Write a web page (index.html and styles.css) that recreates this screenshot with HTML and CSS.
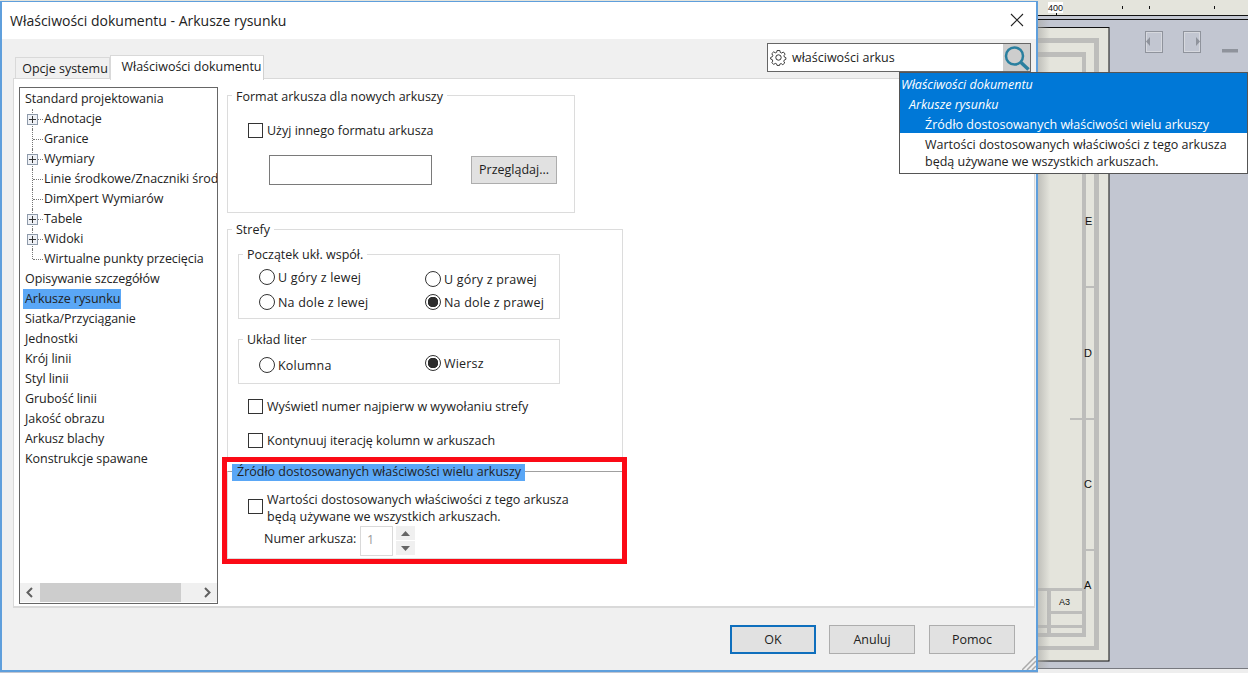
FILE: index.html
```html
<!DOCTYPE html>
<html lang="pl">
<head>
<meta charset="utf-8">
<title>Właściwości dokumentu - Arkusze rysunku</title>
<link rel="stylesheet" href="styles.css">
</head>
<body>
<div class="app">
  <svg class="drawing" width="1248" height="673" viewBox="0 0 1248 673">
    <rect x="0" y="0" width="1248" height="15" fill="#e4e4dc"/>
    <rect x="0" y="15" width="1248" height="1" fill="#111"/>
    <rect x="0" y="19" width="1248" height="1" fill="#111"/>
    <rect x="1048" y="2" width="15" height="11" fill="#fff"/>
    <text x="1048" y="11" class="tiny">400</text>
    <rect x="1056" y="13" width="1" height="2" fill="#111"/>
    <rect x="1122" y="6" width="1" height="3" fill="#111"/>
    <rect x="1149" y="6" width="1" height="3" fill="#111"/>
    <rect x="1214" y="6" width="1" height="3" fill="#111"/>
    <rect x="1000" y="27.5" width="109" height="633.5" fill="#e4e4dc" stroke="#111"/>
    <g fill="#bdbdbb">
      <rect x="1000" y="38" width="99" height="5"/>
      <rect x="1094" y="38" width="5" height="612"/>
      <rect x="1000" y="646" width="99" height="4"/>
      <rect x="1000" y="52" width="86" height="5"/>
      <rect x="1082" y="52" width="4" height="585"/>
      <rect x="1000" y="633" width="86" height="4"/>
      <rect x="1086" y="286" width="8" height="2"/>
      <rect x="1070" y="418" width="24" height="2"/>
      <rect x="1086" y="549" width="8" height="2"/>
      <rect x="1000" y="588" width="82" height="3"/>
      <rect x="1047" y="588" width="4" height="45"/>
      <rect x="1051" y="611" width="31" height="3"/>
      <rect x="1000" y="625" width="82" height="3"/>
    </g>
    <text x="1085" y="225" class="sheetmark">E</text>
    <text x="1084" y="357" class="sheetmark">D</text>
    <text x="1084" y="488" class="sheetmark">C</text>
    <text x="1084" y="589" class="sheetmark">A</text>
    <text x="1059" y="605" class="tiny">A3</text>
    <rect x="1038" y="20" width="12" height="648" fill="url(#shade)"/>
    <defs>
      <linearGradient id="shade">
        <stop offset="0" stop-color="#a8a8a4" stop-opacity=".6"/>
        <stop offset="1" stop-color="#a8a8a4" stop-opacity="0"/>
      </linearGradient>
    </defs>
    <rect x="1038" y="668" width="210" height="1" fill="#77797f"/>
    <rect x="1038" y="669" width="210" height="4" fill="#eeeeee"/>
    <g fill="none" stroke="#8f939c" stroke-width="1">
      <rect x="1145.5" y="31.5" width="17" height="21"/>
      <rect x="1146.5" y="32.5" width="15" height="19" stroke="#d6d8de"/>
      <rect x="1183.5" y="31.5" width="17" height="21"/>
      <rect x="1184.5" y="32.5" width="15" height="19" stroke="#d6d8de"/>
    </g>
    <path d="M1150 37v9l-4-4.500z" fill="#8f939c"/>
    <path d="M1196 37v9l4-4.500z" fill="#8f939c"/>
    <rect x="1222" y="49" width="16" height="3.500" fill="#8f939c"/>
  </svg>

  <section class="dialog">
    <header class="titlebar">
      <h1 class="title">Właściwości dokumentu - Arkusze rysunku</h1>
      <svg class="close" width="14" height="14" viewBox="0 0 14 14"><path d="M1 1l12 12M13 1L1 13" stroke="#222" stroke-width="1.100" fill="none"/></svg>
    </header>

    <div class="tabstrip">
      <div class="tabs">
        <div class="tab">Opcje systemu</div>
        <div class="tab tab-active">Właściwości dokumentu</div>
      </div>
      <div class="search">
        <svg class="gear" width="17" height="17" viewBox="0 0 17 17"><path d="M7 1.500h3l.4 2 1.500.7 1.800-1.100 1.900 2.200-1.200 1.600.3 1.500 1.700.7v1.800l-1.800.8-.4 1.400 1 1.700-2.100 1.800-1.700-1.200-1.400.5-.4 1.500H7l-.5-1.700-1.400-.5-1.600 1.100-2.100-1.900 1-1.600-.4-1.500-1.800-.7V8.900l1.900-.9.400-1.400-1.100-1.700 2.100-2 1.600 1.100 1.500-.6z" fill="none" stroke="#333" transform="scale(.94) translate(.5 .1)"/><circle cx="8.500" cy="8.500" r="2.700" fill="none" stroke="#333"/></svg>
        <span class="search-text">właściwości arkus</span>
        <span class="search-btn">
          <svg width="27" height="27" viewBox="0 0 27 27"><circle cx="11.500" cy="12" r="8.500" fill="none" stroke="#2a7f9f" stroke-width="2.500"/><path d="M18 18.500l7.500 7" stroke="#2a7f9f" stroke-width="3.500" fill="none"/></svg>
        </span>
      </div>
    </div>

    <div class="panel">
      <nav class="tree">
        <div class="tree-rows">
          <div class="node">Standard projektowania</div>
          <div class="node child"><span class="twig"><span class="plus"></span></span>Adnotacje</div>
          <div class="node child"><span class="twig"></span>Granice</div>
          <div class="node child"><span class="twig"><span class="plus"></span></span>Wymiary</div>
          <div class="node child"><span class="twig"></span>Linie środkowe/Znaczniki środka</div>
          <div class="node child"><span class="twig"></span>DimXpert Wymiarów</div>
          <div class="node child"><span class="twig"><span class="plus"></span></span>Tabele</div>
          <div class="node child"><span class="twig"><span class="plus"></span></span>Widoki</div>
          <div class="node child last"><span class="twig"></span>Wirtualne punkty przecięcia</div>
          <div class="node">Opisywanie szczegółów</div>
          <div class="node"><span class="selected">Arkusze rysunku</span></div>
          <div class="node">Siatka/Przyciąganie</div>
          <div class="node">Jednostki</div>
          <div class="node">Krój linii</div>
          <div class="node">Styl linii</div>
          <div class="node">Grubość linii</div>
          <div class="node">Jakość obrazu</div>
          <div class="node">Arkusz blachy</div>
          <div class="node">Konstrukcje spawane</div>
        </div>
        <div class="hscroll">
          <svg class="arrow" width="20" height="19" viewBox="0 0 20 19"><path d="M12 5L7.500 9.500 12 14" fill="none" stroke="#606060" stroke-width="2"/></svg>
          <div class="thumb"></div>
          <svg class="arrow arrow-right" width="20" height="19" viewBox="0 0 20 19"><path d="M8 5l4.500 4.500L8 14" fill="none" stroke="#606060" stroke-width="2"/></svg>
        </div>
      </nav>

      <div class="content">
        <div class="group group-format">
          <div class="group-title">Format arkusza dla nowych arkuszy</div>
          <label class="check check-format"><span class="box"></span>Użyj innego formatu arkusza</label>
          <div class="file-row">
            <div class="file-input"></div>
            <div class="btn btn-browse">Przeglądaj...</div>
          </div>
        </div>

        <div class="group group-zones">
          <div class="group-title">Strefy</div>
          <div class="group sub sub-origin">
            <div class="group-title sub-title">Początek ukł. współ.</div>
            <div class="radios">
              <label class="radio"><span class="dot"></span>U góry z lewej</label>
              <label class="radio low"><span class="dot"></span>U góry z prawej</label>
              <label class="radio"><span class="dot"></span>Na dole z lewej</label>
              <label class="radio"><span class="dot on"></span>Na dole z prawej</label>
            </div>
          </div>
          <div class="group sub sub-letters">
            <div class="group-title sub-title">Układ liter</div>
            <div class="radios">
              <label class="radio low"><span class="dot"></span>Kolumna</label>
              <label class="radio"><span class="dot on"></span>Wiersz</label>
            </div>
          </div>
          <label class="check check-first"><span class="box"></span>Wyświetl numer najpierw w wywołaniu strefy</label>
          <label class="check check-second"><span class="box"></span>Kontynuuj iterację kolumn w arkuszach</label>
        </div>

        <div class="group group-source">
          <div class="group-title source-title">Źródło dostosowanych właściwości wielu arkuszy</div>
          <label class="check check-source"><span class="box"></span><span>Wartości dostosowanych właściwości z tego arkusza<br>będą używane we wszystkich arkuszach.</span></label>
          <div class="sheet-number">
            <span>Numer arkusza:</span>
            <div class="num-input">1</div>
            <div class="spin">
              <span class="spin-btn"><svg width="9" height="5" viewBox="0 0 9 5"><path d="M4.500 0L9 5H0z" fill="#666"/></svg></span>
              <span class="spin-btn"><svg width="9" height="5" viewBox="0 0 9 5"><path d="M4.500 5L0 0h9z" fill="#666"/></svg></span>
            </div>
          </div>
        </div>
        <div class="highlight"></div>
      </div>
    </div>

    <footer class="footer">
      <div class="btn btn-main btn-default">OK</div>
      <div class="btn btn-main">Anuluj</div>
      <div class="btn btn-main btn-last">Pomoc</div>
    </footer>
    <svg class="grip" width="14" height="14" viewBox="0 0 14 14"><path d="M0 14L14 0M5 14l9-9M10 14l4-4" stroke="#aaa" stroke-width="1.500" fill="none"/></svg>
  </section>

  <aside class="results">
    <div class="results-head">
      <div class="res res-1">Właściwości dokumentu</div>
      <div class="res res-2">Arkusze rysunku</div>
      <div class="res res-3">Źródło dostosowanych właściwości wielu arkuszy</div>
    </div>
    <div class="results-body">Wartości dostosowanych właściwości z tego arkusza<br>będą używane we wszystkich arkuszach.</div>
  </aside>
</div>
</body>
</html>
```
FILE: styles.css
```css
* { box-sizing: border-box; }
html, body { margin: 0; padding: 0; }
body {
  width: 1248px;
  height: 673px;
  overflow: hidden;
  background: #c2c6d1;
  font-family: "Open Sans", "Noto Sans", sans-serif;
  font-size: 12.5px;
  color: #1a1a1a;
}
.app { position: relative; width: 1248px; height: 673px; overflow: hidden; }
.drawing { position: absolute; left: 0; top: 0; }
.tiny { font: 9px "Liberation Sans", sans-serif; fill: #111; }
.sheetmark { font: 11px "Liberation Sans", sans-serif; fill: #111; }

.dialog {
  position: absolute;
  left: 0;
  top: 1px;
  width: 1038px;
  height: 671px;
  display: flex;
  flex-direction: column;
  background: #f0f0f0;
  border: 1px solid #5f9fdc;
  border-width: 1px 2px 2px 2px;
}
.titlebar {
  height: 37px;
  flex: none;
  background: #fff;
  display: flex;
  align-items: center;
  justify-content: space-between;
  padding: 0 12px 0 8px;
}
.title { margin: 0; font-size: 14px; font-weight: 400; color: #222; }
.close { display: block; margin-top: -2px; }

.tabstrip {
  height: 39px;
  flex: none;
  display: flex;
  justify-content: space-between;
  align-items: flex-start;
  padding: 4px 5px 0 13px;
}
.tabs { display: flex; align-items: flex-end; height: 36px; }
.tab {
  width: 95px;
  height: 22px;
  line-height: 22px;
  padding-left: 5px;
  text-align: center;
  white-space: nowrap;
  background: #f0f0f0;
  border: 1px solid #d9d9d9;
  border-bottom: 0;
  margin-bottom: 0;
}
.tab-active {
  width: 154px;
  height: 25px;
  line-height: 22px;
  padding-left: 9px;
  background: #fff;
  margin-bottom: -1px;
  position: relative;
  z-index: 1;
  border-right-color: #d0d0d0;
}
.search {
  width: 264px;
  height: 29px;
  background: #fff;
  border: 1px solid #666;
  display: flex;
  align-items: center;
  padding-left: 2px;
}
.gear { flex: none; }
.search-text { margin-left: 5px; flex: 1; color: #222; }
.search-btn {
  width: 27px;
  height: 27px;
  background: #cdcdcd;
  display: flex;
  align-items: center;
  justify-content: center;
}

.panel {
  height: 530px;
  flex: none;
  margin: 0 1px 0 11px;
  background: #fff;
  border: 1px solid #d9d9d9;
  border-width: 1px 1px 2px 1px;
  display: flex;
  padding: 8px 0 0 5px;
  gap: 9px;
}
.tree {
  width: 199px;
  height: 517px;
  flex: none;
  border: 1.500px solid #666;
  display: flex;
  flex-direction: column;
}
.tree-rows { flex: 1; overflow: hidden; padding-top: 1px; }
.node {
  height: 20px;
  line-height: 20px;
  padding-left: 5px;
  white-space: nowrap;
  display: flex;
  align-items: center;
  color: #222;
  letter-spacing: -.06px;
}
.child { padding-left: 7px; }
.selected { background: #5aa7f6; height: 20px; margin-left: -2px; padding: 0 1px 0 2px; }
.twig { position: relative; width: 17px; height: 20px; flex: none; display: block; }
.twig::before {
  content: "";
  position: absolute;
  left: 5px;
  top: 0;
  bottom: 0;
  border-left: 1px dotted #777;
}
.twig::after {
  content: "";
  position: absolute;
  left: 6px;
  right: 1px;
  top: 10px;
  border-top: 1px dotted #777;
}
.last .twig::before { bottom: 10px; }
.plus {
  position: absolute;
  z-index: 1;
  left: 0;
  top: 5px;
  width: 11px;
  height: 11px;
  border: 1px solid #8e9aaa;
  background:
    linear-gradient(#333, #333) center / 7px 1px no-repeat,
    linear-gradient(#333, #333) center / 1px 7px no-repeat,
    #eef1f6;
}
.hscroll { height: 19px; flex: none; display: flex; background: #f0f0f0; margin-bottom: 1px; }
.arrow { flex: none; display: block; }
.thumb { width: 141px; background: #cdcdcd; }
.arrow-right { margin-left: auto; }

.content {
  position: relative;
  padding-top: 8px;
  flex: 1;
}
.group { border: 1px solid #dcdcdc; }
.group-title {
  display: table;
  height: 16px;
  line-height: 16px;
  margin: -8px 0 0 4px;
  padding: 0 4px;
  background: #fff;
  color: #222;
}
.group-format { width: 348px; height: 118px; }
.group-format > .group-title { margin-top: -7px; }
.group-zones { width: 396px; height: 229px; margin-top: 16px; border-bottom: 0; }
.sub { margin-left: 10px; width: 322px; }
.sub-title { margin-left: 4px; padding: 0 4px; }
.sub-origin { height: 65px; margin-top: 16px; }
.sub-letters { height: 45px; margin-top: 20px; }
.sub-letters .radios { margin-top: 3px; }

.check { display: flex; align-items: center; color: #222; white-space: nowrap; }
.box { width: 15px; height: 15px; flex: none; border: 1px solid #333; background: #fff; margin-right: 4px; }
.check-format { margin: 17px 0 0 20px; height: 16px; }
.file-row { display: flex; align-items: flex-start; margin: 17px 0 0 41px; }
.file-input { width: 163px; height: 30px; border: 1px solid #7a7a7a; background: #fff; }
.btn { background: #e1e1e1; border: 1px solid #adadad; text-align: center; color: #222; }
.btn-browse { width: 86px; height: 28px; line-height: 26px; margin: 1px 0 0 39px; }

.radios { display: grid; grid-template-columns: 166px 1fr; grid-auto-rows: 25px; margin: 2px 0 0 20px; }
.radio { display: flex; align-items: center; height: 24px; color: #222; letter-spacing: .2px; }
.low { margin-top: 2px; }
.dot { width: 16px; height: 16px; flex: none; border: 1px solid #333; border-radius: 50%; margin-right: 3px; background: #fff; }
.dot.on { background: radial-gradient(circle, #2d2d2d 0 5px, #fff 5.500px); }

.check-first { margin: 14px 0 0 20px; height: 16px; }
.check-second { margin: 18px 0 0 20px; height: 16px; }

.group-source { width: 396px; height: 88px; margin-top: 13px; border-color: #dcdcdc; border-top-color: #a0a0a0; border-bottom: 1px solid #dcdcdc; }
.source-title { background: #5aa7f6; height: 17px; padding: 0 4px 0 5px; margin: -8px 0 0 4px; }
.check-source { align-items: flex-start; margin: 10px 0 0 20px; line-height: 17px; }
.check-source .box { margin-top: 8px; }
.sheet-number { display: flex; margin: 1px 0 0 36px; height: 30px; align-items: flex-start; }
.sheet-number > span { line-height: 25px; width: 96px; color: #222; }
.num-input { width: 33px; height: 30px; border: 1px solid #d9d9d9; color: #999; line-height: 26px; padding-left: 6px; }
.spin { margin-left: 3px; width: 19px; display: flex; flex-direction: column; gap: 1px; }
.spin-btn { height: 14px; background: #f0f0f0; display: flex; align-items: center; justify-content: center; }
.highlight {
  position: absolute;
  left: -5px;
  top: 370px;
  width: 405px;
  height: 107px;
  border: 5px solid #fb0a16;
}

.footer {
  flex: 1;
  display: flex;
  justify-content: flex-end;
  align-items: flex-start;
  gap: 13px;
  padding: 17px 21px 0 0;
}
.btn-main { width: 86px; height: 29px; line-height: 27px; }
.btn-last { margin-left: 1px; }
.btn-default { border: 2px solid #0f6fbd; line-height: 25px; }
.grip { position: absolute; right: 0; bottom: 0; }

.results {
  position: absolute;
  left: 899px;
  top: 72px;
  width: 349px;
  height: 102px;
  border: 1px solid #555;
  background: #fff;
  z-index: 2;
}
.results-head { background: #0078d7; color: #fff; height: 60px; padding-top: 1px; }
.res { height: 20px; line-height: 22px; white-space: nowrap; }
.res-1 { padding-left: 1px; font-style: italic; }
.res-2 { padding-left: 9px; font-style: italic; }
.res-3 { padding-left: 25px; }
.results-body { padding: 3px 0 0 25px; line-height: 17px; color: #222; }
```
